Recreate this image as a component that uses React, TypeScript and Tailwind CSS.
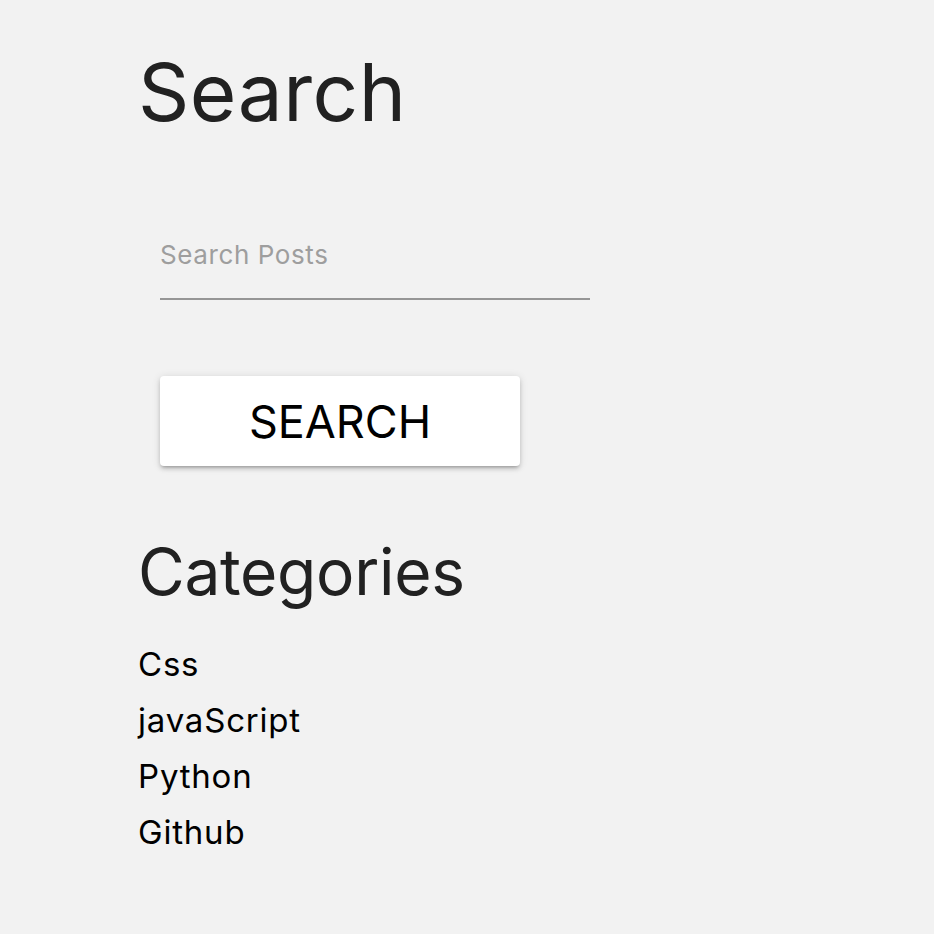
export default function App() {
  const cats = ["Css", "javaScript", "Python", "Github"];
  return (
    <div className="min-h-[934px] w-full bg-[#f2f2f2] font-['Inter',sans-serif] text-[#212121]">
      <div className="pl-[138px] pt-[52px]">
        <h1 className="text-[80px] font-normal leading-none tracking-[0.5px] text-[#212121]">Search</h1>
        <div className="ml-[22px] mt-[110px] w-[430px]">
          <div className="flex h-[58px] items-start border-b-2 border-[#969696]">
            <span className="text-[26px] leading-none tracking-[0.6px] text-[#9e9e9e]">Search Posts</span>
          </div>
        </div>
        <button className="ml-[22px] mt-[76px] flex h-[90px] w-[360px] items-center justify-center rounded-[4px] bg-white text-[45px] leading-none text-black shadow-[0_3px_3px_-2px_rgba(0,0,0,0.2),0_3px_4px_0_rgba(0,0,0,0.14),0_1px_8px_0_rgba(0,0,0,0.12)]">
          SEARCH
        </button>
        <h2 className="mt-[74px] text-[64px] font-normal leading-none tracking-[-0.3px] text-[#212121]">Categories</h2>
        <ul className="mt-[32px] flex flex-col">
          {cats.map((c) => (
            <li key={c} className="h-[56px] text-[33px] leading-[56px] tracking-[0.8px] text-black">
              {c}
            </li>
          ))}
        </ul>
      </div>
    </div>
  );
}
